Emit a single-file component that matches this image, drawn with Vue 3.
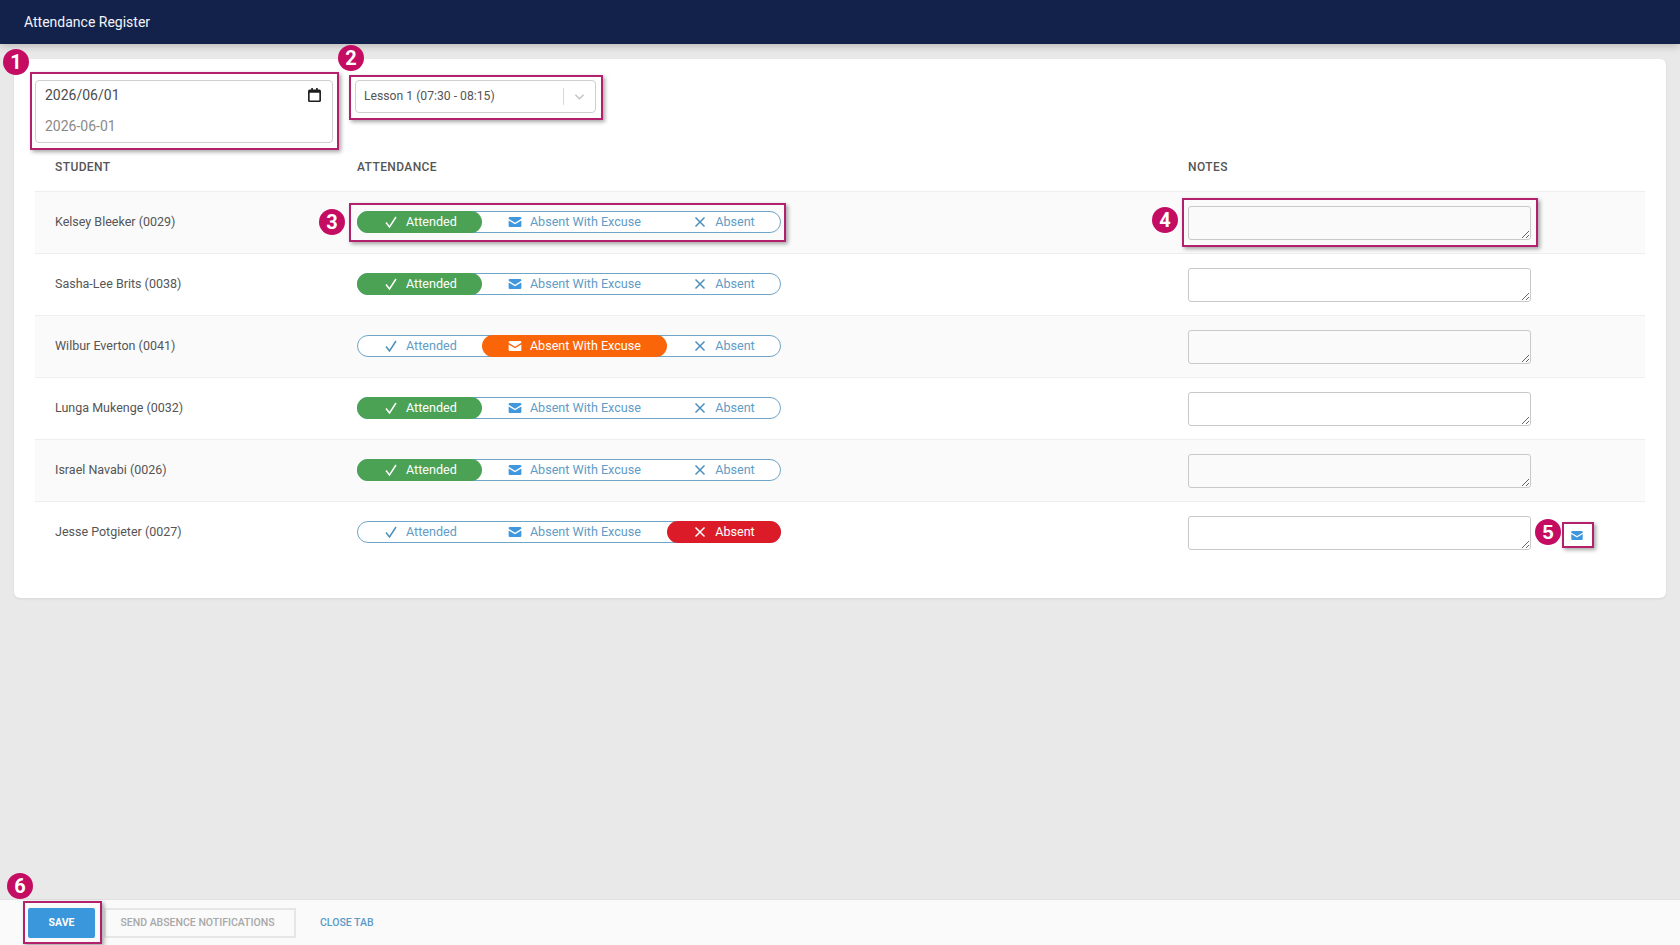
<template>
  <div class="page">
    <header class="topbar">Attendance Register</header>

    <main class="content">
      <section class="card">
        <div class="filters">
          <div class="mark mark-date">
            <span class="frame"></span>
            <span class="badge">1</span>
            <div class="date-box">
              <div class="date-line">
                <span>2026/06/01</span>
                <svg class="calendar" viewBox="0 0 12 13">
                  <path d="M3 0h1.500v1.500h3V0H9v1.500h1.500A1.500 1.500 0 0 1 12 3v8.500a1.500 1.500 0 0 1-1.500 1.500h-9A1.500 1.500 0 0 1 0 11.500V3a1.500 1.500 0 0 1 1.500-1.500H3zM1.500 4.500v7h9v-7z" fill-rule="evenodd" />
                </svg>
              </div>
              <div class="date-hint">2026-06-01</div>
            </div>
          </div>

          <div class="mark mark-lesson">
            <span class="frame"></span>
            <span class="badge">2</span>
            <div class="lesson-select">
              <span class="lesson-label">Lesson 1 (07:30 - 08:15)</span>
              <span class="lesson-sep"></span>
              <svg class="lesson-arrow" viewBox="0 0 12 8">
                <path d="M1.500 1.500 6 6l4.500-4.500" />
              </svg>
            </div>
          </div>
        </div>

        <div class="table-head">
          <div class="col-student">STUDENT</div>
          <div>ATTENDANCE</div>
          <div>NOTES</div>
        </div>

        <div v-for="(student, i) in students" :key="student.name" class="row">
          <div class="col-student">{{ student.name }}</div>

          <div>
            <div class="pill-wrap" :class="{ 'mark mark-pill': i === 0 }">
              <template v-if="i === 0">
                <span class="frame"></span>
                <span class="badge">3</span>
              </template>
              <div class="pill">
                <div
                  v-for="opt in options"
                  :key="opt.key"
                  class="seg"
                  :class="[opt.key, student.status === opt.key ? 'on-' + opt.key : '']"
                >
                  <svg v-if="opt.key === 'attended'" class="icon line" viewBox="0 0 14 14">
                    <path d="M2 7.500 5.500 12 12 2" />
                  </svg>
                  <svg v-else-if="opt.key === 'excused'" class="icon solid" viewBox="0 0 14 11">
                    <path d="M1.300 0h11.400A1.300 1.300 0 0 1 14 1.300v.7L7 6.200 0 2v-.7A1.300 1.300 0 0 1 1.300 0zM0 3.800l7 4.200 7-4.200v5.900A1.300 1.300 0 0 1 12.700 11H1.300A1.300 1.300 0 0 1 0 9.700z" />
                  </svg>
                  <svg v-else class="icon line" viewBox="0 0 14 14">
                    <path d="M2.500 2.500l9 9M11.500 2.500l-9 9" />
                  </svg>
                  <span>{{ opt.label }}</span>
                </div>
              </div>
            </div>
          </div>

          <div class="notes">
            <div class="note-wrap" :class="{ 'mark mark-note': i === 0 }">
              <template v-if="i === 0">
                <span class="frame"></span>
                <span class="badge">4</span>
              </template>
              <textarea class="note"></textarea>
            </div>
            <button v-if="student.status === 'absent'" class="notify mark mark-notify">
              <span class="frame"></span>
              <span class="badge">5</span>
              <svg class="icon solid" viewBox="0 0 14 11">
                <path d="M1.300 0h11.400A1.300 1.300 0 0 1 14 1.300v.7L7 6.200 0 2v-.7A1.300 1.300 0 0 1 1.300 0zM0 3.800l7 4.200 7-4.200v5.900A1.300 1.300 0 0 1 12.700 11H1.300A1.300 1.300 0 0 1 0 9.700z" />
              </svg>
            </button>
          </div>
        </div>
      </section>
    </main>

    <footer class="actions">
      <div class="mark mark-save">
        <span class="frame"></span>
        <span class="badge">6</span>
        <button class="btn-save">SAVE</button>
      </div>
      <button class="btn-send">SEND ABSENCE NOTIFICATIONS</button>
      <button class="btn-close">CLOSE TAB</button>
    </footer>
  </div>
</template>

<script setup>
const options = [
  { key: 'attended', label: 'Attended' },
  { key: 'excused', label: 'Absent With Excuse' },
  { key: 'absent', label: 'Absent' },
]

const students = [
  { name: 'Kelsey Bleeker (0029)', status: 'attended' },
  { name: 'Sasha-Lee Brits (0038)', status: 'attended' },
  { name: 'Wilbur Everton (0041)', status: 'excused' },
  { name: 'Lunga Mukenge (0032)', status: 'attended' },
  { name: 'Israel Navabi (0026)', status: 'attended' },
  { name: 'Jesse Potgieter (0027)', status: 'absent' },
]
</script>

<style>
html,
body {
  margin: 0;
  background: #e9e9e9;
}
</style>

<style scoped>
.page {
  display: flex;
  flex-direction: column;
  height: 945px;
  overflow: hidden;
  font-family: Roboto, "Liberation Sans", sans-serif;
  color: #555;
  background: #e9e9e9;
}

.topbar {
  flex: none;
  height: 44px;
  padding-left: 24px;
  line-height: 45px;
  font-size: 14px;
  color: #f2f4f8;
  background: #13224b;
  box-shadow: 0 2px 8px rgba(0, 0, 0, 0.22);
  position: relative;
}

.content {
  flex: 1;
  padding: 15px 14px 0;
}

.card {
  height: 539px;
  box-sizing: border-box;
  padding: 21px 21px 0;
  background: #fff;
  border-radius: 6px;
  box-shadow: 0 1px 3px rgba(0, 0, 0, 0.08);
}

.filters {
  display: flex;
  align-items: flex-start;
  gap: 22px;
}

/* annotation frames and numbered badges sit over the real controls */
.mark {
  position: relative;
}

.frame {
  position: absolute;
  border: 2px solid #b3206c;
  box-shadow: 2px 2px 4px rgba(0, 0, 0, 0.35);
  pointer-events: none;
}

.badge {
  position: absolute;
  z-index: 2;
  width: 26px;
  height: 26px;
  border-radius: 50%;
  background: #c40c62;
  color: #fff;
  font-size: 20px;
  font-weight: 700;
  line-height: 26px;
  text-align: center;
}

.mark-date .frame { inset: -8px -6px -7px -5px; }
.mark-date .badge { left: -32px; top: -31px; }
.mark-lesson .frame { inset: -5px -7px -7px -6px; }
.mark-lesson .badge { left: -17px; top: -35px; }
.mark-pill .frame { inset: -8px -5px -9px -8px; }
.mark-pill .badge { left: -38px; top: -2px; }
.mark-note .frame { inset: -8px -7px -7px -6px; }
.mark-note .badge { left: -36px; top: 1px; }
.mark-notify .frame { inset: 0; }
.mark-notify .badge { left: -27px; top: -3px; }
.mark-save .frame { inset: -7px -7px -6px -5px; }
.mark-save .badge { left: -21px; top: -35px; }

.date-box {
  width: 298px;
  height: 63px;
  box-sizing: border-box;
  padding: 0 11px 0 9px;
  border: 1px solid #cfcfcf;
  border-radius: 4px;
  background: #fff;
  font-size: 14px;
}

.date-line {
  display: flex;
  align-items: center;
  justify-content: space-between;
  height: 28px;
  color: #4d4d4d;
}

.calendar {
  width: 13px;
  height: 14px;
  fill: #1c1c1c;
}

.date-hint {
  margin-top: 2px;
  line-height: 30px;
  color: #8a8a8a;
}

.lesson-select {
  display: flex;
  align-items: center;
  width: 241px;
  height: 33px;
  box-sizing: border-box;
  padding: 0 5px 0 8px;
  border: 1px solid #cfcfcf;
  border-radius: 4px;
  font-size: 12.2px;
}

.lesson-label {
  flex: 1;
  padding-bottom: 2px;
}

.lesson-sep {
  width: 1px;
  height: 17px;
  background: #d6d6d6;
}

.lesson-arrow {
  width: 11px;
  height: 8px;
  margin: 0 5px 0 10px;
  fill: none;
  stroke: #c4c4c4;
  stroke-width: 1.6;
}

.table-head,
.row {
  display: grid;
  grid-template-columns: 322px 831px 1fr;
  align-items: center;
}

.table-head {
  height: 48px;
  padding-bottom: 1px;
  box-sizing: border-box;
  font-size: 12px;
  font-weight: 500;
  letter-spacing: 0.4px;
  color: #555;
}

.col-student {
  padding-left: 20px;
}

.row {
  height: 62px;
  box-sizing: border-box;
  padding-bottom: 2px;
  border-top: 1px solid #eee;
  font-size: 12.5px;
}

.row:nth-of-type(odd) {
  background: #fafafa;
}

.pill-wrap {
  width: 424px;
}

.pill {
  display: flex;
  height: 22px;
  box-sizing: border-box;
  border: 1px solid #6fa5c6;
  border-radius: 11px;
  background: #fff;
  font-size: 12.6px;
}

.seg {
  display: flex;
  align-items: center;
  justify-content: center;
  gap: 8px;
  height: 22px;
  margin: -1px 0;
  padding: 0 26px;
  border-radius: 11px;
  color: #5f9cc6;
  white-space: nowrap;
}

.seg.attended {
  margin-left: -1px;
  padding: 0 25px 0 27px;
}

.seg.absent {
  flex: 1;
  margin-right: -1px;
  padding: 0;
}

.icon {
  flex: none;
  width: 14px;
  height: 14px;
}

.icon.line {
  fill: none;
  stroke: #4b90bd;
  stroke-width: 1.5;
}

.icon.solid {
  height: 10px;
  fill: #3f97dd;
}

.on-attended,
.on-excused,
.on-absent {
  color: #fff;
}

.on-attended { background: #4ba254; }
.on-excused { background: #fb6509; }
.on-absent { background: #db1c28; }

.on-attended .icon.line,
.on-excused .icon.line,
.on-absent .icon.line {
  stroke: #fff;
}

.on-excused .icon.solid {
  fill: #fff;
}

.notes {
  display: flex;
  align-items: center;
}

.note-wrap {
  display: flex;
  margin-top: 2px;
}

.note {
  display: block;
  width: 343px;
  height: 34px;
  margin: 0;
  box-sizing: border-box;
  border: 1px solid #c9c9c9;
  border-radius: 3px;
  background: transparent;
  outline: none;
}

.notify {
  display: flex;
  align-items: center;
  justify-content: center;
  width: 32px;
  height: 26px;
  margin: 7px 0 0 31px;
  padding: 0 2px 0 0;
  border: 0;
  background: #fff;
}

.notify .icon.solid {
  width: 12px;
  height: 9px;
}

.actions {
  flex: none;
  display: flex;
  align-items: center;
  height: 46px;
  box-sizing: border-box;
  padding-left: 28px;
  border-top: 1px solid #e2e2e2;
  background: #fafafa;
  font-family: inherit;
}

.actions button {
  height: 30px;
  padding: 0;
  font-family: inherit;
  font-size: 10.5px;
  font-weight: 500;
  cursor: pointer;
}

.actions .btn-save {
  display: block;
  width: 67px;
  border: 0;
  border-radius: 2px;
  background: #3a97dc;
  color: #fff;
  font-weight: 700;
}

.actions .btn-send {
  width: 192px;
  margin-left: 9px;
  padding-right: 5px;
  border: 2px solid #e6e6e6;
  background: #fafafa;
  color: #a8a8a8;
}

.actions .btn-close {
  margin-left: 24px;
  border: 0;
  background: none;
  color: #5b9bc7;
}
</style>
